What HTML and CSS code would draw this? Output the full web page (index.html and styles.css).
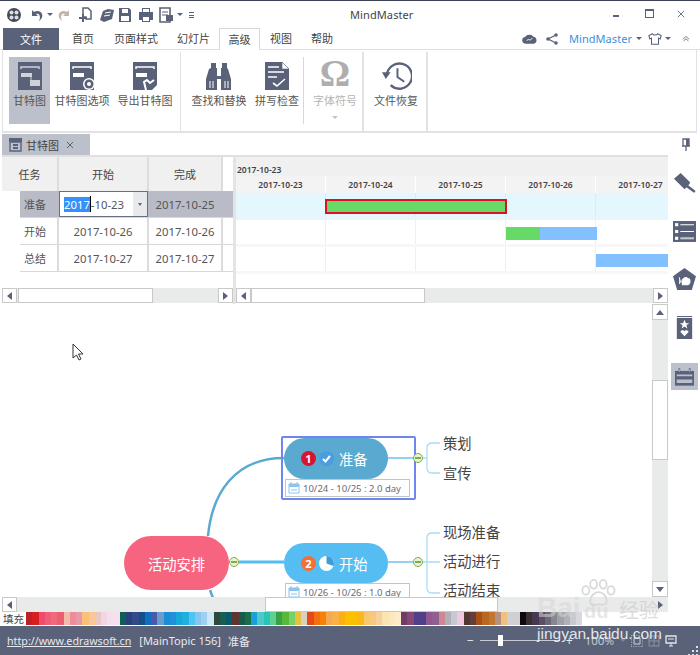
FILE: index.html
```html
<!DOCTYPE html>
<html lang="zh">
<head>
<meta charset="utf-8">
<title>MindMaster</title>
<link rel="stylesheet" href="styles.css">
</head>
<body>
<div class="app">
  <header class="titlebar">
    <div class="qa">
      <svg class="q q-first" viewBox="0 0 16 16"><circle cx="8" cy="8" r="7" fill="#444a58"/><circle cx="5.5" cy="5.5" r="2" fill="#ddd"/><circle cx="10.5" cy="5.5" r="2" fill="#ddd"/><circle cx="5.5" cy="10.5" r="2" fill="#ddd"/><circle cx="10.5" cy="10.5" r="2" fill="#ddd"/></svg>
      <svg class="q" viewBox="0 0 16 16"><path d="M4 3v6h6L8 7c2-1 4 0 4 4l-1 3c3-2 4-5 3-7-1-3-5-4-8-2z" fill="#5a6279"/></svg>
      <span class="car tight"></span>
      <svg class="q mid" viewBox="0 0 16 16"><path d="M12 3v6H6l2-2c-2-1-4 0-4 4l1 3C2 12 1 9 2 7c1-3 5-4 8-2z" fill="#c2b3ab"/></svg>
      <svg class="q mid" viewBox="0 0 16 16"><path d="M6 1h5l3 3v8H9v-2H6z" fill="none" stroke="#5a6279" stroke-width="1.5"/><path d="M5 7v3H2v2h3v3h2v-3h3v-2H7V7z" fill="#5a6279"/></svg>
      <svg class="q" viewBox="0 0 16 16"><path d="M1 13l3-9 5-2 6 1-2 9-8 3z" fill="#5a6279"/><path d="M6 6l6-1M5 9l6-1" stroke="#fff"/></svg>
      <svg class="q tight2" viewBox="0 0 16 16"><path d="M2 1h10l2 2v12H2z" fill="#5a6279"/><rect x="5" y="2" width="6" height="4" fill="#fff"/><rect x="4" y="9" width="8" height="5" fill="#fff"/></svg>
      <svg class="q print" viewBox="0 0 16 16"><path d="M4 1h8v4h3v8h-3v2H4v-2H1V5h3z" fill="#5a6279"/><rect x="5" y="10" width="6" height="4" fill="#fff"/><rect x="5" y="2" width="6" height="3" fill="#fff"/></svg>
      <svg class="q small" viewBox="0 0 16 16"><path d="M2 1h10v14H2z" fill="none" stroke="#5a6279" stroke-width="1.6"/><path d="M4 5h6M4 8h6" stroke="#5a6279"/><path d="M8 8h7v6H8z" fill="#5a6279"/></svg>
      <span class="car tight"></span>
      <span class="more"></span>
    </div>
    <div class="title">MindMaster</div>
    <div class="winctl">
      <span class="wmin"></span>
      <span class="wmax"></span>
      <svg class="wclose" viewBox="0 0 10 10"><path d="M1 1l8 8M9 1l-8 8" stroke="#5a6279" stroke-width="1.1"/></svg>
    </div>
  </header>

  <nav class="tabs">
    <div class="tab tab-file">文件</div>
    <div class="tab t1">首页</div>
    <div class="tab t2">页面样式</div>
    <div class="tab t3">幻灯片</div>
    <div class="tab tab-on">高级</div>
    <div class="tab t5">视图</div>
    <div class="tab t6">帮助</div>
    <div class="tabs-right">
      <svg class="cloud" viewBox="0 0 16 11"><path d="M4 11a3.5 3.5 0 0 1-.5-7A5 5 0 0 1 12 3.500 3.800 3.800 0 0 1 12.500 11z" fill="#5a6279"/><path d="M5 8l2-2 1.500 1.500L11 5" stroke="#fff" fill="none"/></svg>
      <svg class="share" viewBox="0 0 12 12"><path d="M10 2L2 6l8 4" stroke="#5a6279" fill="none" stroke-width="1.3"/><circle cx="10" cy="2" r="1.800" fill="#5a6279"/><circle cx="2" cy="6" r="1.800" fill="#5a6279"/><circle cx="10" cy="10" r="1.800" fill="#5a6279"/></svg>
      <span class="brand">MindMaster</span>
      <span class="car"></span>
      <svg class="shirt" viewBox="0 0 16 14"><path d="M5 1L1 3l1 4 2-1v7h8V6l2 1 1-4-4-2c-1 2-5 2-6 0z" fill="#fff" stroke="#5a6279" stroke-width="1.200"/></svg>
      <span class="car car2"></span>
      <svg class="up" viewBox="0 0 10 8"><path d="M1 5l4-3.500L9 5M2 7l3-2.500L8 7" stroke="#5a6279" fill="none"/></svg>
    </div>
  </nav>

  <section class="ribbon">
    <div class="rb b1 rb-on">
      <svg class="ric" viewBox="0 0 24 28"><rect width="24" height="28" fill="#5a6279"/><path d="M3 7V5h18v2" fill="none" stroke="#cfd2da" stroke-width="1.500"/><rect x="3" y="11" width="11" height="4" fill="#cfd2da"/><rect x="12" y="18" width="10" height="6" fill="#cfd2da"/><path d="M14 13h-1v5" stroke="#cfd2da" fill="none"/></svg>
      <span>甘特图</span>
    </div>
    <div class="rb b2">
      <svg class="ric wide" viewBox="0 0 26 28"><rect width="24" height="28" fill="#5a6279"/><path d="M3 7V5h18v2" fill="none" stroke="#fff" stroke-width="1.500"/><rect x="3" y="11" width="11" height="4" fill="#fff"/><circle cx="19" cy="22" r="6" fill="#fff"/><circle cx="19" cy="22" r="4.500" fill="#5a6279"/><circle cx="19" cy="22" r="2" fill="#fff"/></svg>
      <span>甘特图选项</span>
    </div>
    <div class="rb b3">
      <svg class="ric" viewBox="0 0 24 28"><rect width="24" height="28" fill="#5a6279"/><path d="M3 7V5h18v2" fill="none" stroke="#fff" stroke-width="1.500"/><rect x="3" y="11" width="11" height="4" fill="#fff"/><path d="M13 28l-2-8 3-2 3 3 4-3" fill="none" stroke="#fff" stroke-width="2"/><path d="M19 28l5-5v5z" fill="#fff"/></svg>
      <span>导出甘特图</span>
    </div>
    <div class="gsep sep1"></div>
    <div class="rb b4">
      <svg class="ric bino" viewBox="0 0 26 28"><path d="M5 1h5v5h1v8h4V6h1V1h5v5l1 1 3 10v11H15V17h-4v11H0V17L3 7l2-1z" fill="#5a6279"/><path d="M4 19v7M7 19v7M19 19v7M22 19v7" stroke="#fff"/></svg>
      <span>查找和替换</span>
    </div>
    <div class="rb b5">
      <svg class="ric" viewBox="0 0 24 28"><path d="M0 0h17l7 7v21H0z" fill="#5a6279"/><path d="M17 0v7h7z" fill="#fff" stroke="#5a6279" stroke-width=".6"/><path d="M3 5h11M3 10h16M3 15h9" stroke="#fff" stroke-width="1.300"/><path d="M8 21l4 3 8-7" stroke="#fff" stroke-width="1.600" fill="none"/></svg>
      <span>拼写检查</span>
    </div>
    <div class="isep"></div>
    <div class="rb b6 rb-off">
      <span class="omega">Ω</span>
      <span>字体符号</span>
      <span class="car car-off"></span>
    </div>
    <div class="gsep sep2"></div>
    <div class="rb b7">
      <svg class="ric hist" viewBox="0 0 32 28"><path d="M6 14a13 13 0 1 1 4 9.500" fill="none" stroke="#5a6279" stroke-width="2.400"/><path d="M1 10h9l-5 7z" fill="#5a6279"/><path d="M17 6v9l7 5" fill="none" stroke="#5a6279" stroke-width="2"/></svg>
      <span>文件恢复</span>
    </div>
    <div class="gsep sep3"></div>
  </section>

  <div class="main">
    <div class="content">
      <div class="docbar">
        <div class="doctab">
          <svg class="docic" viewBox="0 0 15 15"><path d="M1 1h13v4H1z" fill="#5a6279"/><path d="M2 5h11v9H2z" fill="none" stroke="#5a6279" stroke-width="1.400"/><path d="M5 8h5M5 11h5" stroke="#5a6279" stroke-width="2"/></svg>
          <span>甘特图</span>
          <svg class="docx" viewBox="0 0 8 8"><path d="M1 1l6 6M7 1L1 7" stroke="#5a6279"/></svg>
        </div>
      </div>

      <section class="gantt">
        <div class="gleft">
          <div class="lhead">
            <div class="lh lh1">任务</div>
            <div class="lh lh2">开始</div>
            <div class="lh lh3">完成</div>
            <div class="lh lh4"></div>
          </div>
          <div class="lrow lrow-on">
            <div class="lc lc1">准备</div>
            <div class="lc lc2 editor"><span class="sel">2017</span><span class="caret"></span><span>-10-23</span><span class="drop"></span></div>
            <div class="lc lc3">2017-10-25</div>
          </div>
          <div class="lrow">
            <div class="lc lc1">开始</div>
            <div class="lc lc2">2017-10-26</div>
            <div class="lc lc3">2017-10-26</div>
          </div>
          <div class="lrow">
            <div class="lc lc1">总结</div>
            <div class="lc lc2">2017-10-27</div>
            <div class="lc lc3">2017-10-27</div>
          </div>
          <div class="lspace"></div>
          <div class="sb sb-left">
            <span class="arrow"><i class="tri-l"></i></span>
            <span class="thumb thumb-a"></span>
            <span class="fill"></span>
            <span class="arrow"><i class="tri-r"></i></span>
          </div>
        </div>
        <div class="gsplit"></div>
        <div class="gright">
          <div class="rmonth">2017-10-23</div>
          <div class="rhead">
            <div class="rh">2017-10-23</div>
            <div class="rh">2017-10-24</div>
            <div class="rh">2017-10-25</div>
            <div class="rh">2017-10-26</div>
            <div class="rh">2017-10-27</div>
          </div>
          <div class="rrows">
            <div class="rrow rrow-on"><span class="cell"></span><span class="cell"></span><span class="cell"></span><span class="cell"></span><span class="cell"></span><span class="bar bar-sel"></span></div>
            <div class="rrow"><span class="cell"></span><span class="cell"></span><span class="cell"></span><span class="cell"></span><span class="cell"></span><span class="bar bar-g"></span><span class="bar bar-b"></span></div>
            <div class="rrow"><span class="cell"></span><span class="cell"></span><span class="cell"></span><span class="cell"></span><span class="cell"></span><span class="bar bar-c"></span></div>
          </div>
          <div class="rspace"></div>
          <div class="sb sb-right">
            <span class="arrow"><i class="tri-l"></i></span>
            <span class="thumb thumb-b"></span>
            <span class="fill"></span>
            <span class="arrow"><i class="tri-r"></i></span>
          </div>
        </div>
      </section>

      <div class="mapwrap">
        <div class="map">
          <svg class="wires" viewBox="0 0 650 293" width="650" height="293">
            <path d="M206 232C210 190 232 154 282 154" fill="none" stroke="#5aa9d0" stroke-width="2.500"/>
            <path d="M208 286l3 8" fill="none" stroke="#5aa9d0" stroke-width="2.500"/>
            <path d="M237 258H282" stroke="#56bdf2" stroke-width="3"/>
            <path d="M386 154H411M386 258H411" stroke="#6fc3ea" stroke-width="1.300"/>
            <path d="M438 139h-8q-5 0-5 5v20q0 5 5 5h8M421 154h4" fill="none" stroke="#a9dcf7" stroke-width="1.300"/>
            <path d="M438 229h-8q-5 0-5 5v50q0 5 5 5h8M421 258h17" fill="none" stroke="#a9dcf7" stroke-width="1.300"/>
          </svg>
          <div class="node root">活动安排</div>
          <div class="selbox"></div>
          <div class="node main1">
            <span class="num n1">1</span>
            <svg class="stat" viewBox="0 0 15 15"><circle cx="7.500" cy="7.500" r="7.500" fill="#4a9de0"/><path d="M4 8l2.500 2.500L11 5" stroke="#fff" stroke-width="2" fill="none"/></svg>
            <span class="ntext">准备</span>
          </div>
          <div class="node main2">
            <span class="num n2">2</span>
            <svg class="stat" viewBox="0 0 15 15"><circle cx="7.500" cy="7.500" r="7.500" fill="#fff"/><path d="M7.500 0a7.500 7.500 0 0 1 7 10L7.500 7.500z" fill="#3f9bd8"/></svg>
            <span class="ntext">开始</span>
          </div>
          <div class="datebox d1">
            <svg class="cal" viewBox="0 0 12 12"><path d="M1 2h10v9H1z" fill="none" stroke="#8cc4ec"/><path d="M1 2h10v3H1z" fill="#8cc4ec"/><path d="M3 0v3M9 0v3" stroke="#8cc4ec"/><path d="M3 8h6" stroke="#8cc4ec"/></svg>
            <span>10/24 - 10/25 : 2.0 day</span>
          </div>
          <div class="datebox d2">
            <svg class="cal" viewBox="0 0 12 12"><path d="M1 2h10v9H1z" fill="none" stroke="#8cc4ec"/><path d="M1 2h10v3H1z" fill="#8cc4ec"/><path d="M3 0v3M9 0v3" stroke="#8cc4ec"/><path d="M3 8h6" stroke="#8cc4ec"/></svg>
            <span>10/26 - 10/26 : 1.0 day</span>
          </div>
          <span class="tog g1"></span>
          <span class="tog g2"></span>
          <span class="tog g3"></span>
          <div class="leaf l1">策划</div>
          <div class="leaf l2">宣传</div>
          <div class="leaf l3">现场准备</div>
          <div class="leaf l4">活动进行</div>
          <div class="leaf l5">活动结束</div>
          <svg class="cursor" viewBox="0 0 12 18"><path d="M1 1v14l3.500-3 2.500 5 2-1-2.500-5H11z" fill="#fff" stroke="#333" stroke-width="1"/></svg>
        </div>
        <div class="vsb">
          <span class="arrow v"><i class="tri-u"></i></span>
          <span class="vgap1"></span>
          <span class="vthumb"></span>
          <span class="fill"></span>
          <span class="arrow v"><i class="tri-d"></i></span>
        </div>
      </div>

      <div class="sb sb-bottom">
        <span class="arrow"><i class="tri-l"></i></span>
        <span class="fillfix"></span>
        <span class="thumb thumb-c"></span>
        <span class="fill"></span>
        <span class="arrow arrow-flat"><i class="tri-r"></i></span>
      </div>

      <div class="palette">
        <span class="fill-label">填充</span>
        <div class="swatches">
          <i style="background:#bd2126"></i><i style="background:#d81e1e"></i><i style="background:#ee4c6a"></i><i style="background:#ee5f7a"></i><i style="background:#f0697c"></i><i style="background:#ee5e73"></i><i style="background:#f2bbab"></i><i style="background:#ee8c99"></i><i style="background:#e89aa8"></i><i style="background:#fcc07a"></i><i style="background:#f9c896"></i><i style="background:#e8c8c0"></i><i style="background:#f3d6e6"></i><i style="background:#f6dfec"></i><i style="background:#f5e1ee"></i>
          <i style="background:#0e5f56"></i><i style="background:#2c3e7e"></i><i style="background:#324a8a"></i><i style="background:#154f8a"></i><i style="background:#0f6ec4"></i><i style="background:#4a5ca8"></i><i style="background:#6a9ccc"></i><i style="background:#1a8cd8"></i><i style="background:#2090d8"></i><i style="background:#18a8d8"></i><i style="background:#20b0e0"></i><i style="background:#50c4f0"></i><i style="background:#88c4f0"></i><i style="background:#a0d0f0"></i><i style="background:#cce8f4"></i>
          <i style="background:#30483c"></i><i style="background:#1a5e50"></i><i style="background:#065a6a"></i><i style="background:#5c3430"></i><i style="background:#1a5a48"></i><i style="background:#1c6e48"></i><i style="background:#18a0d8"></i><i style="background:#50c8c8"></i><i style="background:#28c4b8"></i><i style="background:#60d090"></i><i style="background:#38a048"></i><i style="background:#58b838"></i><i style="background:#78d068"></i><i style="background:#e8c040"></i><i style="background:#d8d0c0"></i>
          <i style="background:#e84818"></i><i style="background:#f07010"></i><i style="background:#f88008"></i><i style="background:#f4a850"></i><i style="background:#f8b048"></i><i style="background:#fcb010"></i><i style="background:#fcc000"></i><i style="background:#fcc000"></i><i style="background:#fcb818"></i><i style="background:#f8c870"></i><i style="background:#f8c880"></i><i style="background:#f8d0a0"></i><i style="background:#fce4b0"></i><i style="background:#fce8c0"></i><i style="background:#fcecc8"></i>
          <i style="background:#6e3c68"></i><i style="background:#884870"></i><i style="background:#50408c"></i><i style="background:#50408c"></i><i style="background:#905890"></i><i style="background:#906090"></i><i style="background:#d08890"></i><i style="background:#b0b0b8"></i><i style="background:#c8c8d0"></i><i style="background:#f0c8e0"></i>
          <i style="background:#503830"></i><i style="background:#604038"></i><i style="background:#a85018"></i><i style="background:#b86820"></i><i style="background:#c07830"></i><i style="background:#b89080"></i><i style="background:#f0c080"></i><i style="background:#d0d0d0"></i><i style="background:#d0d0d0"></i>
          <i style="background:#100810"></i><i style="background:#383030"></i><i style="background:#483850"></i><i style="background:#585060"></i><i style="background:#706878"></i><i style="background:#888890"></i><i style="background:#a0a0a8"></i><i style="background:#b0b0b8"></i><i style="background:#c8c8d0"></i><i style="background:#d8d8e0"></i>
        </div>
      </div>
    </div>

    <aside class="side">
      <svg class="pin" viewBox="0 0 10 13"><path d="M2 1h6v7H2zM1 8h8M5 8v5" fill="none" stroke="#5a6279" stroke-width="1.300"/><path d="M5 1h3v7H5z" fill="#5a6279"/></svg>
      <svg class="sic" viewBox="0 0 24 24"><path d="M1 7l7-6 10 10-2 3-4 4z" fill="#5a6279"/><path d="M15 15l7 5" stroke="#5a6279" stroke-width="2.600" stroke-linecap="round"/></svg>
      <svg class="sic" viewBox="0 0 22 22"><rect y="1" width="22" height="20" fill="#5a6279"/><rect x="2" y="3" width="3" height="3" fill="#fff"/><rect x="2" y="9.500" width="3" height="3" fill="#fff"/><rect x="2" y="16" width="3" height="3" fill="#fff"/><path d="M7 4.500h13M7 11h13" stroke="#fff"/><path d="M7 17.500h13" stroke="#c4c7d0" stroke-width="2"/></svg>
      <svg class="sic" viewBox="0 0 22 22"><path d="M11 0l11 8-4 13H4L0 8z" fill="#5a6279"/><path d="M9 15c-2-4 3-7 5-5 3 0 3 5 0 6H9zM6 9l1 4-1 2" fill="#fff" stroke="#fff"/></svg>
      <svg class="sic" viewBox="0 0 22 24"><path d="M3 0h16v1H3z" fill="#5a6279"/><rect x="3" y="2" width="16" height="22" fill="#5a6279"/><path d="M11 4l1.500 3.500h3.500l-3 2.200 1 3.300-3-2-3 2 1-3.300-3-2.200h3.500z" fill="#fff"/><path d="M11 21l-4-4c-1-2 3-3 4-1 1-2 5-1 4 1z" fill="#fff"/></svg>
      <div class="side-on">
        <svg class="sic2" viewBox="0 0 22 20"><path d="M0 3h22v17H0z" fill="#5a6279"/><path d="M5 0v5M17 0v5" stroke="#5a6279" stroke-width="2"/><path d="M5 1v3M17 1v3" stroke="#bcc0cb"/><path d="M2 7h18v2H2zM2 13h18v4H2z" fill="#bcc0cb"/></svg>
      </div>
    </aside>
  </div>

  <footer class="status">
    <a class="url">http://www.edrawsoft.cn</a>
    <span class="topic">[MainTopic 156]</span>
    <span class="stat-name">准备</span>
    <div class="status-r">
      <span class="zm zm-minus">−</span>
      <div class="slider"><span class="knob"></span></div>
      <span class="zm zm-plus">+</span>
      <span class="zoomv">100%</span>
      <span class="car car-dim"></span>
      <svg class="st" viewBox="0 0 12 12"><path d="M0 0h12v12H0z" fill="none" stroke="#cfd2da" stroke-dasharray="1.500 1"/><path d="M3 3h6v6H3z" fill="none" stroke="#cfd2da"/></svg>
      <svg class="st" viewBox="0 0 12 12"><path d="M1 1h10v10H1zM1 6h10M6 1v10" fill="none" stroke="#8e94a6"/></svg>
      <svg class="st" viewBox="0 0 12 12"><path d="M1 1h10v7H1z" fill="none" stroke="#e4e6ec" stroke-width="1.300"/><path d="M6 8v3M4 11h4M3 4h6" stroke="#e4e6ec"/></svg>
      <svg class="grip" viewBox="0 0 10 10"><path d="M8 1h2v2H8zM4 5h2v2H4zM8 5h2v2H8zM0 9h2v1H0zM4 9h2v1H4zM8 9h2v1H8z" fill="#dfe1e8"/></svg>
    </div>
  </footer>

  <div class="wm">
    <svg class="paw" viewBox="0 0 46 32"><g fill="none" stroke="#d8d8d8" stroke-width="2"><ellipse cx="9" cy="13" rx="4" ry="5"/><ellipse cx="18" cy="6" rx="4" ry="5"/><ellipse cx="29" cy="6" rx="4" ry="5"/><ellipse cx="38" cy="13" rx="4" ry="5"/><path d="M14 26c0-8 6-11 10-11s9 4 9 10c0 5-5 5-9 4-4 1-10 2-10-3z"/></g></svg>
    <span class="wm-bai">Bai</span>
    <span class="wm-du">du</span>
    <span class="wm-jy">经验</span>
    <span class="wm-url">jingyan.baidu.com</span>
  </div>
</div>
</body>
</html>
```
FILE: styles.css
```css
* { box-sizing: border-box; }
html, body { margin: 0; padding: 0; background: #fff; }
body { font-family: "Noto Sans", "Noto Sans CJK SC", sans-serif; color: #444; }
.app { position: relative; width: 700px; height: 655px; overflow: hidden; display: flex; flex-direction: column; background: #fff; }

/* Title bar */
.titlebar { height: 28px; flex: none; border-top: 1px solid #3b4054; display: grid; grid-template-columns: 350px auto 1fr; align-items: center; }
.qa { display: flex; align-items: center; }
.q { width: 16px; height: 16px; margin-left: 6px; flex: none; }
.q-first { margin-left: 6px; }
.q.mid { margin-left: 4px; }
.q.tight2 { margin-left: 2px; }
.q.print { margin-left: 5px; }
.q.small { margin-left: 4px; }
.car { display: inline-block; width: 0; height: 0; border-left: 3px solid transparent; border-right: 3px solid transparent; border-top: 3px solid #5a6279; flex: none; }
.car.tight { margin-left: 3px; }
.more { width: 5px; height: 6px; margin-left: 6px; border-top: 1px solid #5a6279; border-bottom: 3px double #5a6279; }
.title { font-size: 11px; color: #444; letter-spacing: .1px; }
.winctl { display: flex; justify-content: flex-end; align-items: center; padding-right: 1px; }
.wmin { width: 6px; height: 2px; background: #5a6279; margin-right: 26px; margin-top: 3px; }
.wmax { width: 9px; height: 9px; border: 1px solid #5a6279; border-top-width: 2px; margin-right: 23px; margin-bottom: 2px; }
.wclose { width: 8px; height: 8px; margin-right: 14px; margin-bottom: 2px; }

/* Tabs */
.tabs { height: 22px; flex: none; display: flex; align-items: stretch; font-size: 11px; color: #444; padding-left: 3px; position: relative; border-bottom: 1px solid #e0e0e0; }
.tab { display: flex; align-items: center; justify-content: center; line-height: 1; }
.tab-file { width: 56px; background: #5a6279; color: #fff; margin-bottom: -1px; }
.t1 { margin-left: 13px; }
.t2 { margin-left: 20px; }
.t3 { margin-left: 19px; }
.tab-on { width: 41px; margin-left: 9px; background: #fff; border: 1px solid #d8d8d8; border-bottom: 0; margin-bottom: -1px; z-index: 1; }
.t5 { margin-left: 10px; }
.t6 { margin-left: 19px; }
.tabs-right { margin-left: auto; display: flex; align-items: center; padding-right: 10px; }
.cloud { width: 15px; height: 11px; }
.share { width: 12px; height: 12px; margin-left: 9px; }
.brand { color: #3b8fe0; font-size: 11px; margin-left: 11px; margin-right: 4px; letter-spacing: .05px; }
.shirt { width: 14px; height: 14px; margin-left: 6px; }
.tabs-right .car2 { margin-left: 3px; }
.up { width: 8px; height: 7px; margin-left: 11px; }

/* Ribbon */
.ribbon { height: 83px; flex: none; margin: 0 3px 0 2px; border: solid #e2e2e2; border-width: 0 1px 2px 1px; display: flex; align-items: stretch; position: relative; padding-left: 6px; }
.rb { display: flex; flex-direction: column; align-items: center; font-size: 11px; line-height: 14px; color: #555; height: 67px; margin-top: 7px; flex: none; white-space: nowrap; }
.rb span { display: block; }
.ric { width: 24px; height: 28px; margin-top: 5px; margin-bottom: 4px; flex: none; }
.ric.wide { width: 26px; margin-left: 2px; }
.ric.bino { width: 26px; }
.ric.hist { width: 31px; }
.b1 { width: 41px; background: #bcc0cb; }
.b2 { width: 60px; margin-left: 2px; }
.b3 { width: 60px; margin-left: 3px; }
.b4 { width: 60px; margin-left: 8px; }
.b5 { width: 52px; margin-left: 2px; }
.b6 { width: 48px; margin-left: 7px; }
.b7 { width: 48px; margin-left: 8px; }
.gsep { width: 1px; background: #e2e2e2; flex: none; margin-top: 2px; }
.sep1 { margin-left: 5px; }
.sep2 { margin-left: 3px; width: 2px; }
.sep3 { margin-left: 6px; width: 2px; }
.isep { width: 1px; background: #d8d8d8; height: 67px; margin: 7px 0 0 0; flex: none; }
.rb-off { color: #b4b4b4; }
.omega { font-family: "Liberation Serif", serif; font-size: 38px; line-height: 32px; height: 37px; color: #aeaeae; font-weight: bold; }
.car-off { margin-top: 8px; border-top-color: #c4c4c4; }

/* Main */
.main { flex: 1; min-height: 0; display: flex; }
.content { width: 668px; flex: none; padding-left: 2px; display: flex; flex-direction: column; }
.docbar { height: 22px; flex: none; padding-top: 1px; }
.doctab { width: 88px; height: 21px; background: #bcc0cb; display: flex; align-items: center; font-size: 11px; color: #444; padding-left: 6px; }
.docic { width: 15px; height: 15px; margin-right: 3px; }
.docx { width: 8px; height: 8px; margin-left: 7px; }

/* Gantt */
.gantt { height: 149px; flex: none; display: flex; border-top: 2px solid #e0e0e0; }
.gleft { width: 231px; flex: none; display: flex; flex-direction: column; overflow: hidden; }
.gsplit { width: 3px; flex: none; background: #e4e4e4; }
.gright { flex: 1; min-width: 0; display: flex; flex-direction: column; overflow: hidden; }
.lhead { display: flex; height: 34px; flex: none; }
.lh { background: #f0f0f0; display: flex; align-items: center; justify-content: center; font-size: 11px; color: #444; border-right: 2px solid #dcdcdc; }
.lh1 { width: 57px; }
.lh2 { width: 90px; }
.lh3 { width: 74px; }
.lh4 { flex: 1; border-right: 0; background: #fff; }
.lrow { display: flex; height: 27px; flex: none; margin-left: 18px; border-bottom: 1px solid #d8d8d8; font-size: 11.300px; color: #555; align-items: stretch; }
.lrow-on { background: #b9bcc6; }
.lc { display: flex; align-items: center; justify-content: center; border-right: 2px solid #dcdcdc; }
.lc1 { width: 39px; font-size: 11px; justify-content: flex-start; padding-left: 4px; }
.lc2 { width: 90px; }
.lc3 { width: 74px; }
.lrow-on .lc { border-right-color: transparent; }
.editor { background: #fff; border: 1px solid #5a6279; height: 26px; padding-left: 4px; justify-content: flex-start; position: relative; width: 89px; margin-right: 1px; }
.lrow-on .editor { border-color: #6a7083; }
.sel { background: #3390ff; color: #fff; height: 15px; line-height: 15px; }
.caret { width: 1px; height: 16px; background: #000; }
.drop { position: absolute; right: 0; top: 0; bottom: 0; width: 14px; background: #e8e9ec; }
.drop::after { content: ""; position: absolute; left: 5px; top: 11px; border-left: 2.500px solid transparent; border-right: 2.500px solid transparent; border-top: 3px solid #666; }
.lspace { height: 16px; flex: none; }
.rspace { height: 14px; flex: none; }

.sb { display: flex; height: 15px; flex: none; background: #e9eaea; }
.arrow { width: 15px; height: 15px; flex: none; background: #fff; border: 1px solid #c8c8c8; display: flex; align-items: center; justify-content: center; }
.arrow-flat { background: transparent; border: 0; }
.thumb { background: #fff; border: 1px solid #c8c8c8; height: 15px; flex: none; }
.fill { flex: 1; min-width: 0; min-height: 0; }
.fillfix { width: 248px; flex: none; }
.thumb-a { width: 135px; margin-left: 1px; }
.thumb-b { width: 174px; }
.thumb-c { width: 233px; }
i.tri-l, i.tri-r, i.tri-u, i.tri-d { display: block; width: 0; height: 0; }
.tri-l { border-top: 4px solid transparent; border-bottom: 4px solid transparent; border-right: 5px solid #5a6279; }
.tri-r { border-top: 4px solid transparent; border-bottom: 4px solid transparent; border-left: 5px solid #5a6279; }
.tri-u { border-left: 4px solid transparent; border-right: 4px solid transparent; border-bottom: 5px solid #5a6279; }
.tri-d { border-left: 4px solid transparent; border-right: 4px solid transparent; border-top: 5px solid #5a6279; }

.rmonth { height: 19px; flex: none; background: #f0f0f0; font-size: 8.500px; font-weight: 600; color: #444; padding: 7px 0 0 1px; line-height: 11px; white-space: nowrap; }
.rhead { display: flex; height: 17px; flex: none; background: #f3f3f3; }
.rh { width: 90px; flex: none; text-align: center; font-size: 8.500px; font-weight: 600; color: #444; line-height: 17px; border-right: 1px solid #fff; }
.rrows { flex: none; width: 432px; }
.rrow { position: relative; display: flex; height: 27px; border-bottom: 3px solid #f7f7f7; }
.rrow-on { background: #e4f7fe; border-bottom-color: #eaf5fa; }
.cell { width: 90px; flex: none; border-right: 1px solid #efefef; }
.rrow-on .cell { border-right-color: #dcecf2; }
.bar { position: absolute; }
.bar-sel { left: 89px; top: 6px; width: 182px; height: 15px; background: #66d966; border: 2px solid #e01020; }
.bar-g { left: 270px; top: 7px; width: 34px; height: 13px; background: #66d966; }
.bar-b { left: 304px; top: 7px; width: 57px; height: 13px; background: #82c0ff; }
.bar-c { left: 360px; top: 7px; width: 72px; height: 13px; background: #82c0ff; }

/* Map */
.mapwrap { flex: 1; min-height: 0; display: flex; }
.map { position: relative; width: 650px; flex: none; overflow: hidden; background: #fff; }
.vsb { flex: 1; background: #e9eaea; display: flex; flex-direction: column; min-width: 0; }
.arrow.v { width: 16px; height: 16px; }
.vgap1 { height: 60px; flex: none; }
.vthumb { height: 80px; flex: none; background: #fff; border: 1px solid #c8c8c8; }
.wires { position: absolute; left: 0; top: 0; }
.node { position: absolute; display: flex; align-items: center; color: #fff; font-size: 14.300px; }
.root { left: 122px; top: 232px; width: 105px; height: 54px; background: #f7647f; border-radius: 27px; justify-content: center; }
.main1 { left: 282px; top: 134px; width: 104px; height: 41px; background: #5aa9d0; border-radius: 21px; padding-left: 17px; }
.main2 { left: 282px; top: 239px; width: 104px; height: 40px; background: #56bdf2; border-radius: 20px; padding-left: 17px; }
.selbox { position: absolute; left: 279px; top: 132px; width: 135px; height: 64px; border: 2.500px solid #6f86f0; border-radius: 2px; }
.num { width: 15px; height: 15px; border-radius: 50%; color: #fff; font-size: 11px; font-weight: 700; display: flex; align-items: center; justify-content: center; flex: none; }
.n1 { background: #d9142f; }
.n2 { background: #f36f3a; }
.stat { width: 15px; height: 15px; margin-left: 3px; flex: none; }
.ntext { margin-left: 5px; }
.datebox { position: absolute; left: 283px; width: 125px; height: 18px; border: 1px solid #c4c4c4; background: #fff; display: flex; align-items: center; padding-left: 2px; font-size: 9.500px; color: #6a6a78; white-space: nowrap; }
.d1 { top: 175px; }
.d2 { top: 279px; }
.cal { width: 12px; height: 12px; margin-right: 3px; flex: none; }
.tog { position: absolute; width: 10px; height: 10px; border-radius: 50%; background: #e8f2d8; border: 1px solid #7fae4a; }
.tog::after { content: ""; position: absolute; left: 1px; right: 1px; top: 3px; height: 2px; background: #7fae4a; }
.g1 { left: 227px; top: 253px; }
.g2 { left: 411px; top: 149px; }
.g3 { left: 411px; top: 253px; }
.leaf { position: absolute; left: 441px; font-size: 14.300px; color: #444; line-height: 20px; white-space: nowrap; }
.l1 { top: 130px; }
.l2 { top: 160px; }
.l3 { top: 219px; }
.l4 { top: 248px; }
.l5 { top: 277px; }
.cursor { position: absolute; left: 70px; top: 39px; width: 12px; height: 18px; }

/* Palette */
.palette { height: 14px; flex: none; display: flex; align-items: stretch; margin-left: -2px; }
.fill-label { width: 26px; flex: none; font-size: 10.500px; line-height: 15px; color: #444; padding-left: 3px; white-space: nowrap; overflow: hidden; }
.swatches { display: grid; grid-auto-flow: column; grid-auto-columns: 6.250px; height: 13px; }
.swatches i { display: block; }

/* Side */
.side { width: 32px; flex: none; display: flex; flex-direction: column; align-items: center; }
.pin { width: 10px; height: 13px; margin-top: 5px; margin-bottom: 21px; margin-left: 4px; flex: none; }
.sic { width: 23px; height: 23px; margin-bottom: 25px; flex: none; }
.side-on { width: 27px; height: 27px; background: #bcc0cb; display: flex; align-items: center; justify-content: center; margin-top: -1px; flex: none; }
.sic2 { width: 19px; height: 18px; }

/* Status */
.status { height: 29px; flex: none; background: #5a6279; display: flex; align-items: center; color: #e8e9ee; font-size: 11px; padding: 0 2px 0 7px; }
.url { text-decoration: underline; color: #e8e9ee; font-size: 10.700px; }
.topic { margin-left: 8px; }
.stat-name { margin-left: 7px; }
.status-r { margin-left: auto; display: flex; align-items: center; }
.zm { font-size: 12px; color: #e8e9ee; line-height: 1; }
.slider { position: relative; width: 80px; height: 1px; background: #c8cad2; margin: 0 6px; }
.knob { position: absolute; left: 18px; top: -5px; width: 5px; height: 11px; background: #fff; }
.zoomv { margin-left: 12px; font-size: 11.500px; color: #c5c8d2; }
.car-dim { border-top-color: #7d8497; margin-left: 6px; }
.st { width: 12px; height: 12px; margin-left: 5px; }
.grip { width: 10px; height: 10px; margin-left: 11px; margin-top: 18px; }

/* Watermark */
.wm { position: absolute; inset: 0; pointer-events: none; }
.wm span { position: absolute; white-space: nowrap; line-height: 1; font-family: "Liberation Sans", sans-serif; }
.paw { position: absolute; left: 578px; top: 579px; width: 40px; height: 28px; }
.wm-bai { left: 537px; top: 594px; font-size: 28px; font-weight: 700; color: rgba(215,215,215,.55); }
.wm-du { left: 584px; top: 601px; font-size: 20px; font-weight: 700; color: rgba(215,215,215,.6); }
.wm-jy { left: 619px; top: 600px; font-size: 20px; color: rgba(205,205,205,.7); font-family: "Noto Sans CJK SC", sans-serif !important; }
.wm-url { left: 537px; top: 626px; font-size: 15.500px; color: rgba(255,255,255,.85); }
```
